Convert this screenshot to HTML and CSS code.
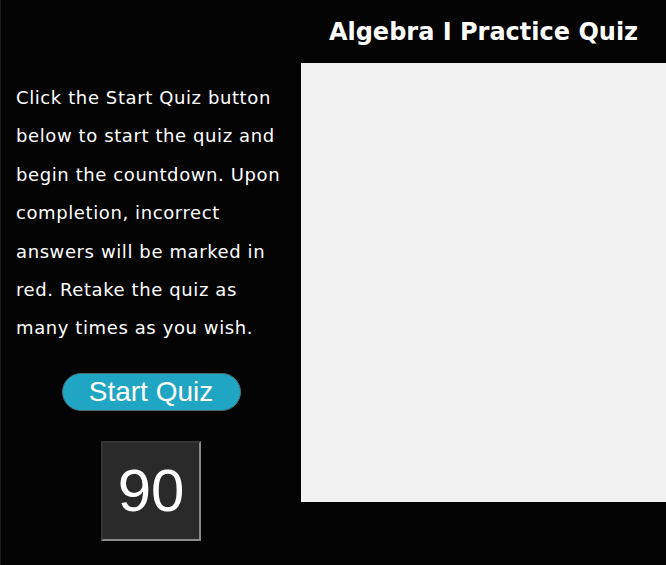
FILE: index.html
```html
<!DOCTYPE html>
<html lang="en">
<head>
<meta charset="utf-8">
<title>Algebra I Practice Quiz</title>
<link rel="stylesheet" href="styles.css">
</head>
<body>
<div class="page">
  <aside class="side">
    <p class="intro">Click the Start Quiz button below to start the quiz and begin the countdown. Upon completion, incorrect answers will be marked in red. Retake the quiz as many times as you wish.</p>
    <button class="start">Start Quiz</button>
    <div class="timer">90</div>
  </aside>
  <main class="main">
    <h1 class="title">Algebra I Practice Quiz</h1>
    <section class="quiz"></section>
  </main>
</div>
</body>
</html>
```
FILE: styles.css
```css
html, body {
  margin: 0;
  padding: 0;
  background: #040404;
  height: 100%;
}
body {
  border-left: 1px solid #1e1e1e;
  box-sizing: border-box;
}
.page {
  display: grid;
  grid-template-columns: 300px 1fr;
  height: 565px;
}
.side {
  display: flex;
  flex-direction: column;
  align-items: center;
  padding-top: 79px;
}
.intro {
  margin: 0;
  padding: 0 8px 0 15px;
  color: #ffffff;
  font-family: "DejaVu Sans", Verdana, sans-serif;
  font-size: 18px;
  letter-spacing: 0.6px;
  line-height: 38.4px;
  align-self: stretch;
}
.start {
  margin-top: 25px;
  width: 179px;
  height: 38px;
  border: 1px solid #4a6d75;
  border-radius: 19px;
  background: #20a6c2;
  color: #ffffff;
  font-family: "Liberation Sans", Arial, sans-serif;
  font-size: 28px;
  line-height: 36px;
  padding: 0;
}
.timer {
  margin-top: 30px;
  width: 96px;
  height: 96px;
  border: 2px inset #8a8a8a;
  background: #2a2a2a;
  color: #ffffff;
  font-family: "Liberation Sans", Arial, sans-serif;
  font-size: 60px;
  display: flex;
  align-items: center;
  justify-content: center;
}
.main {
  display: flex;
  flex-direction: column;
}
.title {
  margin: 0;
  height: 63px;
  display: flex;
  align-items: center;
  justify-content: center;
  color: #ffffff;
  font-family: "DejaVu Sans", Tahoma, sans-serif;
  font-weight: bold;
  font-size: 24px;
}
.quiz {
  height: 439px;
  background: #f2f2f2;
}
```
